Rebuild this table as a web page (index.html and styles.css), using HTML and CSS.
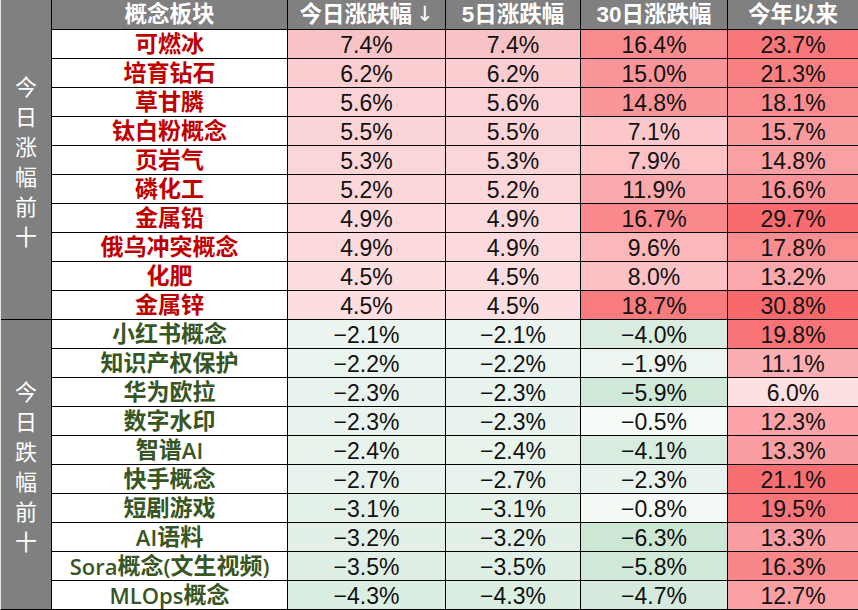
FILE: index.html
```html
<!DOCTYPE html>
<html lang="zh">
<head>
<meta charset="utf-8">
<title>概念板块涨跌幅</title>
<link rel="stylesheet" href="styles.css">
</head>
<body>
<div class="sheet">
  <div class="side side-up">今<br>日<br>涨<br>幅<br>前<br>十</div>
  <div class="hd">概念板块</div>
  <div class="hd">今日涨跌幅<span class="arrow">↓</span></div>
  <div class="hd">5日涨跌幅</div>
  <div class="hd">30日涨跌幅</div>
  <div class="hd">今年以来</div>

  <div class="name up">可燃冰</div><div class="num" style="background:#f8c3c6">7.4%</div><div class="num" style="background:#f8c3c6">7.4%</div><div class="num" style="background:#f98b8e">16.4%</div><div class="num" style="background:#f8777a">23.7%</div>
  <div class="name up">培育钻石</div><div class="num" style="background:#facdd0">6.2%</div><div class="num" style="background:#facdd0">6.2%</div><div class="num" style="background:#f99598">15.0%</div><div class="num" style="background:#f87f82">21.3%</div>
  <div class="name up">草甘膦</div><div class="num" style="background:#fbd3d6">5.6%</div><div class="num" style="background:#fbd3d6">5.6%</div><div class="num" style="background:#f99699">14.8%</div><div class="num" style="background:#f98a8d">18.1%</div>
  <div class="name up">钛白粉概念</div><div class="num" style="background:#fbd4d7">5.5%</div><div class="num" style="background:#fbd4d7">5.5%</div><div class="num" style="background:#fcc8cb">7.1%</div><div class="num" style="background:#fa9a9d">15.7%</div>
  <div class="name up">页岩气</div><div class="num" style="background:#fbd6d9">5.3%</div><div class="num" style="background:#fbd6d9">5.3%</div><div class="num" style="background:#fcc2c5">7.9%</div><div class="num" style="background:#fa9fa2">14.8%</div>
  <div class="name up">磷化工</div><div class="num" style="background:#fbd7da">5.2%</div><div class="num" style="background:#fbd7da">5.2%</div><div class="num" style="background:#faa9ac">11.9%</div><div class="num" style="background:#f99598">16.6%</div>
  <div class="name up">金属铅</div><div class="num" style="background:#fcd9dc">4.9%</div><div class="num" style="background:#fcd9dc">4.9%</div><div class="num" style="background:#f9898c">16.7%</div><div class="num" style="background:#f86c6f">29.7%</div>
  <div class="name up">俄乌冲突概念</div><div class="num" style="background:#fcd9dc">4.9%</div><div class="num" style="background:#fcd9dc">4.9%</div><div class="num" style="background:#fbb7ba">9.6%</div><div class="num" style="background:#f98e91">17.8%</div>
  <div class="name up">化肥</div><div class="num" style="background:#fcdde0">4.5%</div><div class="num" style="background:#fcdde0">4.5%</div><div class="num" style="background:#fcc1c4">8.0%</div><div class="num" style="background:#faa8ab">13.2%</div>
  <div class="name up">金属锌</div><div class="num" style="background:#fcdde0">4.5%</div><div class="num" style="background:#fcdde0">4.5%</div><div class="num" style="background:#f87b7e">18.7%</div><div class="num" style="background:#f8696b">30.8%</div>

  <div class="side side-down">今<br>日<br>跌<br>幅<br>前<br>十</div>
  <div class="name down">小红书概念</div><div class="num" style="background:#ebf4ef">−2.1%</div><div class="num" style="background:#ebf4ef">−2.1%</div><div class="num" style="background:#d9ecdf">−4.0%</div><div class="num" style="background:#f87477">19.8%</div>
  <div class="name down">知识产权保护</div><div class="num" style="background:#eaf4ee">−2.2%</div><div class="num" style="background:#eaf4ee">−2.2%</div><div class="num" style="background:#ecf5ef">−1.9%</div><div class="num" style="background:#fbaeb1">11.1%</div>
  <div class="name down">华为欧拉</div><div class="num" style="background:#e9f3ed">−2.3%</div><div class="num" style="background:#e9f3ed">−2.3%</div><div class="num" style="background:#cfe8d7">−5.9%</div><div class="num" style="background:#fde0e2">6.0%</div>
  <div class="name down">数字水印</div><div class="num" style="background:#e9f3ed">−2.3%</div><div class="num" style="background:#e9f3ed">−2.3%</div><div class="num" style="background:#f7fbf8">−0.5%</div><div class="num" style="background:#fba3a6">12.3%</div>
  <div class="name down">智谱<span class="lat">AI</span></div><div class="num" style="background:#e8f3ec">−2.4%</div><div class="num" style="background:#e8f3ec">−2.4%</div><div class="num" style="background:#d8ecdf">−4.1%</div><div class="num" style="background:#fa9ea1">13.3%</div>
  <div class="name down">快手概念</div><div class="num" style="background:#e6f2eb">−2.7%</div><div class="num" style="background:#e6f2eb">−2.7%</div><div class="num" style="background:#e9f3ed">−2.3%</div><div class="num" style="background:#f86f72">21.1%</div>
  <div class="name down">短剧游戏</div><div class="num" style="background:#e3f1e8">−3.1%</div><div class="num" style="background:#e3f1e8">−3.1%</div><div class="num" style="background:#f5faf6">−0.8%</div><div class="num" style="background:#f87679">19.5%</div>
  <div class="name down"><span class="lat">AI</span>语料</div><div class="num" style="background:#e2f0e7">−3.2%</div><div class="num" style="background:#e2f0e7">−3.2%</div><div class="num" style="background:#cce7d4">−6.3%</div><div class="num" style="background:#fa9ea1">13.3%</div>
  <div class="name down"><span class="lat">Sora</span>概念<span class="lat">(</span>文生视频<span class="lat">)</span></div><div class="num" style="background:#e0efe6">−3.5%</div><div class="num" style="background:#e0efe6">−3.5%</div><div class="num" style="background:#d0e8d7">−5.8%</div><div class="num" style="background:#f8878a">16.3%</div>
  <div class="name down"><span class="lat">MLOps</span>概念</div><div class="num" style="background:#dbeee2">−4.3%</div><div class="num" style="background:#dbeee2">−4.3%</div><div class="num" style="background:#d5eadc">−4.7%</div><div class="num" style="background:#fa9fa2">12.7%</div>
</div>
</body>
</html>
```

FILE: styles.css
```css
html, body {
  margin: 0;
  padding: 0;
  background: #ffffff;
}

.sheet {
  display: grid;
  grid-template-columns: 50px 235px 157px 134px 146px 130px;
  grid-template-rows: 29px repeat(20, 28px);
  gap: 1px;
  width: 857px;
  border-left: 1px solid #e8e8e8;
  border-bottom: 1px solid #000;
  background: #000;
  font-family: "Liberation Sans", "Noto Sans CJK SC", sans-serif;
}

.sheet > div {
  display: flex;
  align-items: center;
  justify-content: center;
  white-space: nowrap;
  overflow: hidden;
}

.side {
  background: #808080;
  color: #ffffff;
  font-family: "Noto Sans CJK SC", sans-serif;
  font-size: 22px;
  line-height: 30px;
  text-align: center;
}

.side-up {
  grid-column: 1;
  grid-row: 1 / span 11;
}

.side-down {
  grid-column: 1;
  grid-row: 12 / span 10;
}

.hd {
  background: #808080;
  color: #ffffff;
  font-family: "Liberation Sans", "Noto Sans CJK SC", sans-serif;
  font-weight: bold;
  font-size: 22.5px;
  line-height: 29px;
}

.arrow {
  font-weight: normal;
  font-family: "DejaVu Sans", sans-serif;
  font-size: 21px;
  margin-left: 4px;
}

.name {
  background: #ffffff;
  font-family: "Liberation Sans", "Noto Sans CJK SC", sans-serif;
  font-weight: bold;
  font-size: 23px;
  line-height: 26px;
}

.lat {
  font-family: "Open Sans", "Liberation Sans", sans-serif;
  font-weight: 600;
  font-size: 22px;
  line-height: 26px;
}

.name.up {
  color: #c00000;
}

.name.down {
  color: #375623;
}

.num {
  font-family: "Liberation Sans", sans-serif;
  font-size: 23px;
  line-height: 26px;
  color: #111111;
  padding-top: 1px;
}
```
